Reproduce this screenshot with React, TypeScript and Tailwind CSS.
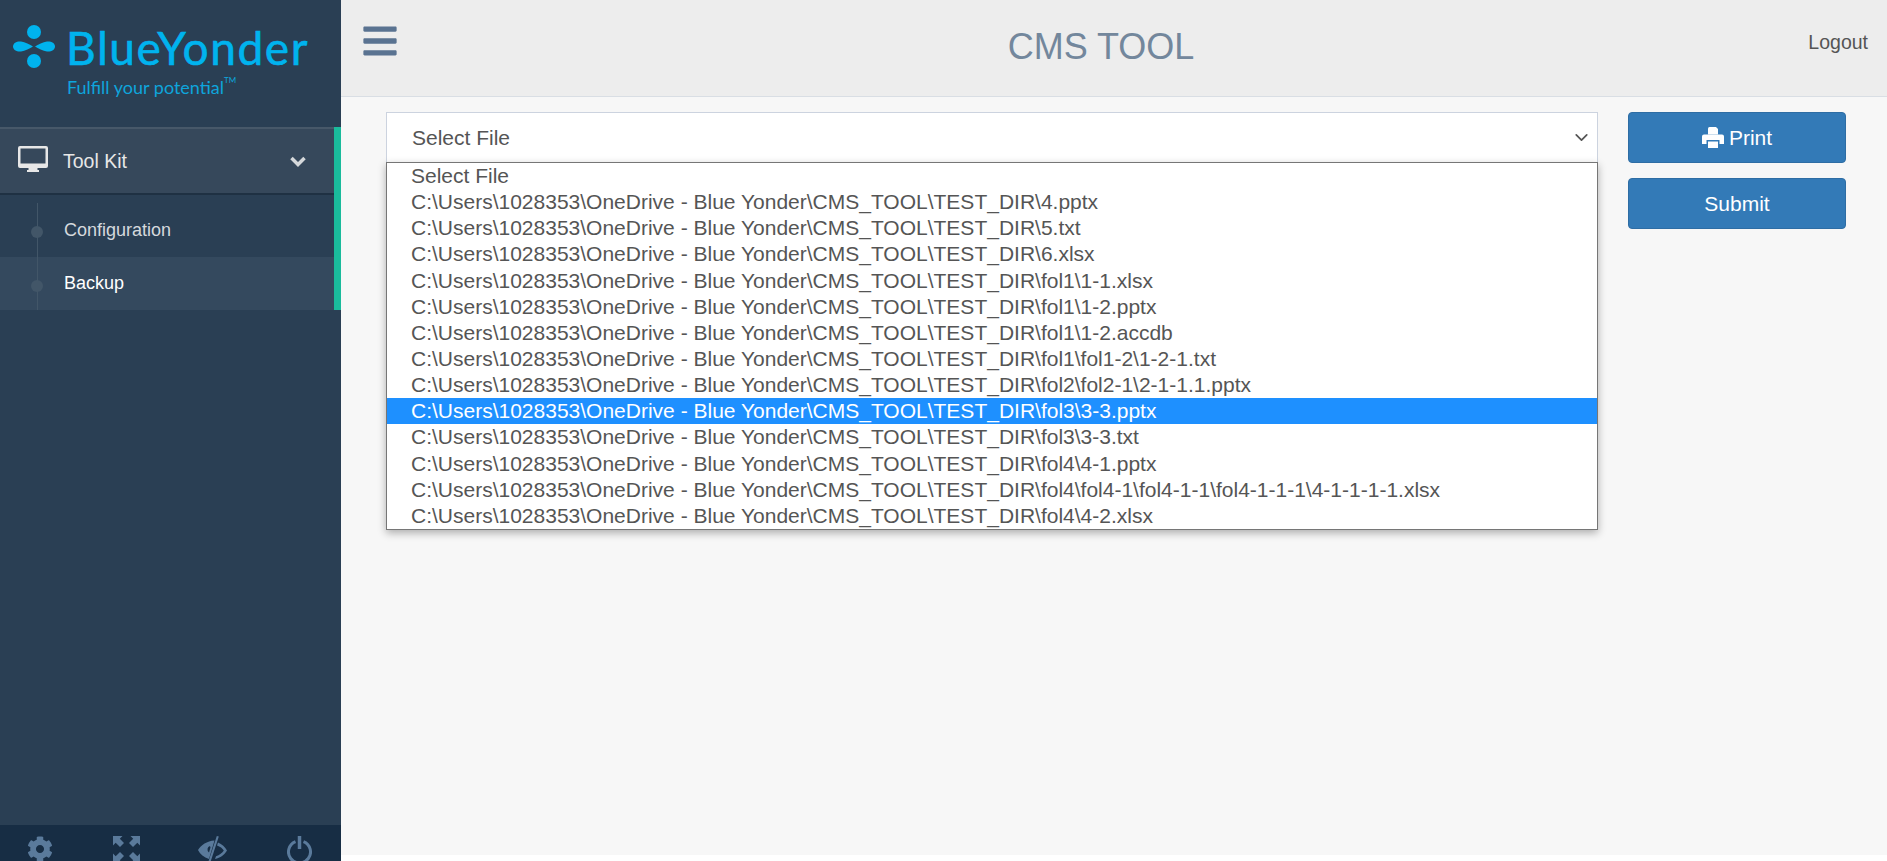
import { FaBars, FaCog } from "react-icons/fa";
import { ChevronDown } from "lucide-react";

const BASE = "C:\\Users\\1028353\\OneDrive - Blue Yonder\\CMS_TOOL\\TEST_DIR\\";

const files = [
  "4.pptx",
  "5.txt",
  "6.xlsx",
  "fol1\\1-1.xlsx",
  "fol1\\1-2.pptx",
  "fol1\\1-2.accdb",
  "fol1\\fol1-2\\1-2-1.txt",
  "fol2\\fol2-1\\2-1-1.1.pptx",
  "fol3\\3-3.pptx",
  "fol3\\3-3.txt",
  "fol4\\4-1.pptx",
  "fol4\\fol4-1\\fol4-1-1\\fol4-1-1-1\\4-1-1-1-1.xlsx",
  "fol4\\4-2.xlsx",
];

function DesktopIcon() {
  return (
    <svg width="30" height="26" viewBox="0 0 30 26" fill="currentColor" className="shrink-0 -mt-[4px]">
      <path
        fillRule="evenodd"
        d="M2 0H28A2 2 0 0 1 30 2V20A2 2 0 0 1 28 22H2A2 2 0 0 1 0 20V2A2 2 0 0 1 2 0ZM2.500 2.500V17.500H27.500V2.500Z"
      />
      <path d="M10.500 22H19.500V24H21V26H9V24H10.500Z" />
    </svg>
  );
}

function PrintIcon() {
  return (
    <svg width="22" height="21" viewBox="0 0 22 21" fill="currentColor" className="shrink-0">
      <path d="M6 1.500A1.500 1.500 0 0 1 7.500 0H14L16 2V7.500H6Z" />
      <path d="M2 7.500H20A2 2 0 0 1 22 9.500V17H17.500V13H4.500V17H0V9.500A2 2 0 0 1 2 7.500Z" />
      <path d="M6 14.500H16V21H6Z" />
    </svg>
  );
}

function FullscreenIcon() {
  return (
    <svg width="27" height="27" viewBox="0 0 27 27" fill="currentColor">
      <path d="M0 0H9.500L6.800 2.700L11 6.900L7 11L2.700 6.800L0 9.500Z" />
      <path d="M27 0H17.500L20.200 2.700L16 6.900L20 11L24.300 6.800L27 9.500Z" />
      <path d="M0 27H9.500L6.800 24.300L11 20.100L7 16L2.700 20.200L0 17.500Z" />
      <path d="M27 27H17.500L20.200 24.300L16 20.100L20 16L24.300 20.200L27 17.500Z" />
    </svg>
  );
}

function EyeCloseIcon() {
  return (
    <svg width="29" height="26" viewBox="0 0 29 26" fill="currentColor">
      <path
        fillRule="evenodd"
        d="M16.500 4.500C9 5 3 9 0 14C2 18 6 21.500 11 23ZM12 10A3 3.500 0 0 0 11 16.500L12.500 11.500Z"
      />
      <path d="M20 6.500L19 9.500C22 10.500 24.500 12.200 25.800 14.500C24.300 17 21.500 19 18 20.200L17 23C22.500 22 26.500 18.800 29 14.500C27 11 24 8 20 6.500Z" />
      <path d="M18.800 0L20.800 0.600L12.500 26L10.500 25.400Z" />
    </svg>
  );
}

function PowerIcon() {
  return (
    <svg width="25" height="28" viewBox="0 0 25 28" fill="none" stroke="currentColor" strokeWidth="3">
      <path d="M8.500 5.600A11 11 0 1 0 16.500 5.600" />
      <path d="M12.500 0V13" strokeWidth="3.500" />
    </svg>
  );
}

function Logo() {
  return (
    <div className="h-[127px] pt-[21px] pl-[12px] shrink-0">
      <div className="flex items-center gap-[8px]">
        <svg width="47" height="44" viewBox="0 0 47 44" className="shrink-0 text-[#00b3ee]" fill="currentColor">
          <circle cx="22" cy="7" r="7" />
          <circle cx="22" cy="36" r="7" />
          <path d="M1 21.500C1 18 5 16 9 16.500C13 17 18 19.500 21 21.500C18 23.500 13 26 9 26.500C5 27 1 25 1 21.500Z" />
          <path d="M43 21.500C43 18 39 16 35 16.500C31 17 26 19.500 23 21.500C26 23.500 31 26 35 26.500C39 27 43 25 43 21.500Z" />
        </svg>
        <span className="font-['Lato',sans-serif] text-[46px] leading-[50px] tracking-[1.6px] [-webkit-text-stroke:0.6px_#00b3ee] text-[#00b3ee] -ml-[1px] pt-[2px]">BlueYonder</span>
      </div>
      <div className="pl-[55px] mt-[3px] font-['Lato',sans-serif] text-[18px] leading-[22px] text-[#0ea5dc]">
        Fulfill your potential<sup className="text-[8px] align-super">TM</sup>
      </div>
    </div>
  );
}

function Sidebar() {
  return (
    <aside className="w-[341px] shrink-0 h-[861px] bg-[#2a3f54] flex flex-col text-[#ecf0f1]">
      <Logo />
      <nav className="border-r-[7px] border-[#1abb9c]">
        <div className="h-[68px] flex items-center bg-[#36485b] border-t-2 border-t-[#475869] border-b-2 border-b-[#1f3143] pl-[18px] pr-[28px] text-[#e7e7e7]">
          <DesktopIcon />
          <span className="ml-[15px] text-[19.500px] flex-1 pt-[1px]">Tool Kit</span>
          <svg width="16" height="11" viewBox="0 0 16 11" fill="none" stroke="#d5d8db" strokeWidth="3.500">
            <path d="M1.500 2L8 8.500L14.500 2" />
          </svg>
        </div>
        <div className="relative pt-[1px]">
          <span className="absolute left-[37px] top-[8px] bottom-0 w-px bg-[#425668]" />
          <div className="h-[61px] flex items-end pb-[14px] pl-[64px] text-[18px] leading-[26px] text-[#d5d9dd] relative">
            <span className="absolute left-[31px] top-[30px] w-[12px] h-[12px] rounded-full bg-[#425668]" />
            Configuration
          </div>
          <div className="h-[53px] flex items-center pl-[64px] text-[18px] text-white bg-[#34495e] relative">
            <span className="absolute left-[31px] top-[23px] w-[12px] h-[12px] rounded-full bg-[#425668]" />
            <span className="absolute left-[37px] top-0 bottom-0 w-px bg-[#425668]" />
            Backup
          </div>
        </div>
      </nav>
      <div className="flex-1" />
      <div className="h-[36px] bg-[#172d44] flex items-start text-[#5a7a9b] overflow-hidden pt-[11px] pl-[27px]">
        <FaCog className="text-[26px] shrink-0" />
        <div className="ml-[60px] shrink-0"><FullscreenIcon /></div>
        <div className="ml-[58px] shrink-0"><EyeCloseIcon /></div>
        <div className="ml-[60px] shrink-0"><PowerIcon /></div>
      </div>
    </aside>
  );
}

function FileSelect() {
  return (
    <div className="relative w-[1212px]">
      <div className="h-[51px] bg-white border border-[#ccd3df] flex items-center justify-between pl-[25px] pr-[5px] text-[21px] text-[#555]">
        <span>Select File</span>
        <ChevronDown size={21} strokeWidth={2} className="text-[#555]" />
      </div>
      <ul className="absolute left-0 right-0 top-[50px] bg-white border border-[#767676] shadow-[0_3px_8px_rgba(0,0,0,0.3)] text-[21px] text-[#555] leading-[26.140px]">
        <li className="pl-[24px]">Select File</li>
        {files.map((f) => (
          <li
            key={f}
            className={f === "fol3\\3-3.pptx" ? "pl-[24px] bg-[#1e90ff] text-white" : "pl-[24px]"}
          >
            {BASE + f}
          </li>
        ))}
      </ul>
    </div>
  );
}

export default function App() {
  return (
    <div className="flex h-[861px] overflow-hidden bg-white font-['Liberation_Sans',sans-serif]">
      <Sidebar />
      <div className="flex-1 flex flex-col">
        <header className="h-[97px] bg-[#ededed] border-b border-[#d9dee4] flex items-start relative">
          <FaBars className="text-[#5a7391] text-[38px] ml-[20px] mt-[22px]" />
          <h1 className="absolute left-0 right-[26px] top-[25px] text-center text-[36px] leading-[44px] text-[#73879c]">CMS TOOL</h1>
          <a className="ml-auto mr-[19px] mt-[30px] text-[19.500px] leading-[24px] text-[#555]">Logout</a>
        </header>
        <main className="h-[758px] bg-[#f7f7f7] flex items-start pt-[15px] pl-[45px] gap-[30px]">
          <FileSelect />
          <div className="flex flex-col gap-[15px] w-[218px]">
            <button className="h-[51px] rounded-[4px] bg-[#337ab7] border border-[#2e6da4] text-white text-[21px] flex items-center justify-center gap-[5px]">
              <PrintIcon /> Print
            </button>
            <button className="h-[51px] rounded-[4px] bg-[#337ab7] border border-[#2e6da4] text-white text-[21px]">Submit</button>
          </div>
        </main>
      </div>
    </div>
  );
}
